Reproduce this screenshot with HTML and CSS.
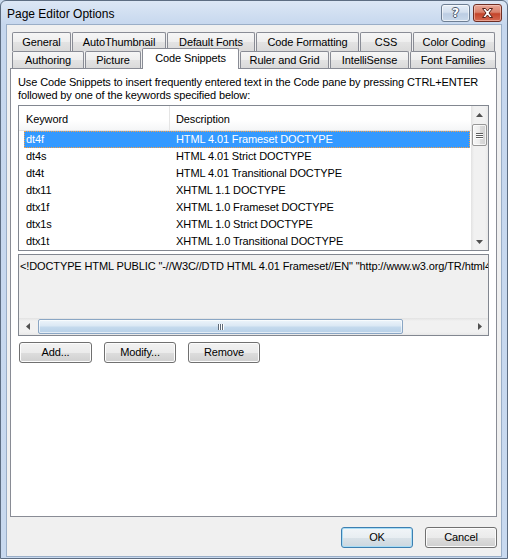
FILE: index.html
```html
<!DOCTYPE html>
<html>
<head>
<meta charset="utf-8">
<title>Page Editor Options</title>
<link rel="stylesheet" href="styles.css">
</head>
<body>
<div class="window">
  <div class="titlebar">
    <div class="title">Page Editor Options</div>
    <div class="caption-buttons">
      <div class="cbtn help"><span class="qmark">?</span></div>
      <div class="cbtn close">
        <svg width="13" height="10" viewBox="0 0 13 10"><path d="M1.5 0.5 L4.5 0.5 L6.5 3 L8.5 0.5 L11.5 0.5 L8 5 L11.5 9.5 L8.5 9.5 L6.5 7 L4.5 9.5 L1.5 9.5 L5 5 Z" fill="#fff" stroke="#5a2219" stroke-width="1" stroke-linejoin="round"/></svg>
      </div>
    </div>
  </div>
  <div class="client">
    <div class="tabs">
      <div class="tabrow row1">
        <div class="tab w-general">General</div>
        <div class="tab w-auto">AutoThumbnail</div>
        <div class="tab w-fonts">Default Fonts</div>
        <div class="tab w-format">Code Formatting</div>
        <div class="tab w-css">CSS</div>
        <div class="tab w-color">Color Coding</div>
      </div>
      <div class="tabrow row2">
        <div class="tab w-author">Authoring</div>
        <div class="tab w-picture">Picture</div>
        <div class="tab selected w-snippets">Code Snippets</div>
        <div class="tab w-ruler">Ruler and Grid</div>
        <div class="tab w-intelli">IntelliSense</div>
        <div class="tab w-families">Font Families</div>
      </div>
    </div>
    <div class="panel">
      <p class="intro">Use Code Snippets to insert frequently entered text in the Code pane by pressing CTRL+ENTER<br>followed by one of the keywords specified below:</p>
      <div class="listview">
        <div class="lv-main">
          <div class="lv-header">
            <div class="h-kw">Keyword</div>
            <div class="h-desc">Description</div>
          </div>
          <div class="lv-rows">
            <div class="row selected"><span class="c1">dt4f</span><span class="c2">HTML 4.01 Frameset DOCTYPE</span></div>
            <div class="row"><span class="c1">dt4s</span><span class="c2">HTML 4.01 Strict DOCTYPE</span></div>
            <div class="row"><span class="c1">dt4t</span><span class="c2">HTML 4.01 Transitional DOCTYPE</span></div>
            <div class="row"><span class="c1">dtx11</span><span class="c2">XHTML 1.1 DOCTYPE</span></div>
            <div class="row"><span class="c1">dtx1f</span><span class="c2">XHTML 1.0 Frameset DOCTYPE</span></div>
            <div class="row"><span class="c1">dtx1s</span><span class="c2">XHTML 1.0 Strict DOCTYPE</span></div>
            <div class="row"><span class="c1">dtx1t</span><span class="c2">XHTML 1.0 Transitional DOCTYPE</span></div>
          </div>
        </div>
        <div class="vscroll">
          <div class="sb-btn"><svg width="7" height="4" viewBox="0 0 7 4"><path d="M3.5 0 L7 4 L0 4 Z" fill="#505050"/></svg></div>
          <div class="vthumb"><span class="grip"></span><span class="grip"></span><span class="grip"></span></div>
          <div class="sb-fill"></div>
          <div class="sb-btn"><svg width="7" height="4" viewBox="0 0 7 4"><path d="M0 0 L7 0 L3.5 4 Z" fill="#505050"/></svg></div>
        </div>
      </div>
      <div class="codebox">
        <div class="code-text">&lt;!DOCTYPE HTML PUBLIC "-//W3C//DTD HTML 4.01 Frameset//EN" "http://www.w3.org/TR/html4/frameset.dtd"&gt;</div>
        <div class="hscroll">
          <div class="hsb-btn"><svg width="4" height="7" viewBox="0 0 4 7"><path d="M4 0 L4 7 L0 3.5 Z" fill="#505050"/></svg></div>
          <div class="hthumb"><span class="vgrip"></span><span class="vgrip"></span><span class="vgrip"></span></div>
          <div class="sb-fill"></div>
          <div class="hsb-btn"><svg width="4" height="7" viewBox="0 0 4 7"><path d="M0 0 L4 3.5 L0 7 Z" fill="#505050"/></svg></div>
        </div>
      </div>
      <div class="btnrow">
        <div class="button w-add">Add...</div>
        <div class="button w-std">Modify...</div>
        <div class="button w-std">Remove</div>
      </div>
    </div>
    <div class="footer">
      <div class="button default w-std">OK</div>
      <div class="button w-std">Cancel</div>
    </div>
  </div>
</div>
</body>
</html>
```

FILE: styles.css
```css
* { box-sizing: border-box; margin: 0; padding: 0; }
html, body { width: 508px; height: 559px; overflow: hidden; }
body {
  font-family: "Liberation Sans", Arial, sans-serif;
  font-size: 11px;
  letter-spacing: -0.12px;
  color: #000;
  background: #c9d9ed;
}
.window {
  width: 508px;
  height: 559px;
  border: 1px solid #5d6d82;
  border-radius: 6px 6px 0 0;
  background: linear-gradient(#dce7f5, #c6d7ee 24px, #c8d9ef);
  display: flex;
  flex-direction: column;
}
.titlebar {
  height: 24px;
  flex: none;
  display: flex;
  align-items: flex-start;
  padding-left: 6px;
  padding-right: 5px;
}
.title {
  flex: 1;
  font-size: 12px;
  line-height: 14px;
  margin-top: 6px;
  letter-spacing: 0;
  color: #000;
}
.caption-buttons {
  display: flex;
  gap: 3px;
  margin-top: 3px;
}
.cbtn {
  width: 29px;
  height: 18px;
  border-radius: 3px;
  display: flex;
  align-items: center;
  justify-content: center;
}
.help {
  border: 1px solid #6d7e93;
  background: linear-gradient(#e6eef8, #d3dfee 45%, #bccde3 55%, #c9d8ea);
  box-shadow: inset 0 0 0 1px rgba(255,255,255,0.6);
}
.qmark {
  font-family: "DejaVu Sans", sans-serif;
  font-weight: bold;
  font-size: 12px;
  line-height: 12px;
  color: #fff;
  text-shadow: 1px 0 0 #4a5a6e, -1px 0 0 #4a5a6e, 0 1px 0 #4a5a6e, 0 -1px 0 #4a5a6e;
}
.close {
  border: 1px solid #6e2e24;
  background: linear-gradient(#e9a797, #d9826d 45%, #c4442b 55%, #d56a52);
  box-shadow: inset 0 0 0 1px rgba(255,220,210,0.5);
}
.client {
  flex: 1;
  margin: 0 6px 2px 6px;
  background: #f0f0f0;
  box-shadow: 0 0 0 1px #9aaec7;
  display: flex;
  flex-direction: column;
}
/* tabs */
.tabs {
  padding: 7px 0 0 5px;
  position: relative;
  z-index: 2;
}
.tabrow {
  display: flex;
  gap: 1px;
  align-items: flex-start;
}
.row1 { height: 19px; }
.row2 { height: 17px; }
.tab {
  flex: none;
  text-align: center;
  border: 1px solid #898c95;
  border-bottom: none;
  border-radius: 2px 2px 0 0;
  background: linear-gradient(#f6f6f6, #eeeeee 50%, #e3e3e3 52%, #dadada);
  white-space: nowrap;
}
.row1 .tab { height: 19px; line-height: 18px; }
.row2 .tab { height: 17px; line-height: 16px; }
.row2 .tab.selected {
  height: 21px;
  line-height: 19px;
  margin-top: -3px;
  background: #fff;
  position: relative;
  z-index: 3;
}
.w-general { width: 59px; }
.w-auto { width: 94px; }
.w-fonts { width: 88px; }
.w-format { width: 103px; }
.w-css { width: 52px; }
.w-color { width: 82px; }
.w-author { width: 72px; }
.w-picture { width: 56px; }
.w-snippets { width: 97px; }
.w-ruler { width: 89px; }
.w-intelli { width: 79px; }
.w-families { width: 86px; }
/* panel */
.panel {
  position: relative;
  z-index: 1;
  margin-left: 3px;
  width: 487px;
  height: 449px;
  border: 1px solid #898c95;
  background: #fff;
  padding: 7px 0 0 7px;
  flex: none;
}
.intro {
  line-height: 13px;
  white-space: nowrap;
}
.listview {
  margin-top: 3px;
  width: 471px;
  height: 146px;
  border: 1px solid #828790;
  display: flex;
  background: #fff;
}
.lv-main { width: 452px; flex: none; }
.lv-header {
  height: 25px;
  display: flex;
  border-bottom: 1px solid #e5e5e5;
  background: linear-gradient(#ffffff, #ffffff 60%, #f5f6f7);
  line-height: 24px;
  padding-top: 1px;
}
.h-kw {
  width: 151px;
  padding-left: 7px;
  border-right: 1px solid #e5e5e5;
  margin-top: -1px;
  padding-top: 1px;
}
.h-desc { padding-left: 6px; }
.row {
  height: 17px;
  line-height: 15px;
  margin-left: 5px;
  width: 446px;
  border: 1px solid transparent;
  display: flex;
  white-space: nowrap;
}
.row.selected {
  background: #3399ff;
  color: #fff;
  border: 1px dotted #f3a04a;
}
.c1 { width: 145px; padding-left: 1px; }
.c2 { padding-left: 6px; }
/* scrollbars */
.vscroll {
  width: 17px;
  flex: none;
  display: flex;
  flex-direction: column;
  background: linear-gradient(90deg, #e2e2e2, #f1f1f1 3px, #f1f1f1 14px, #e8e8e8);
}
.sb-btn {
  height: 17px;
  flex: none;
  display: flex;
  align-items: center;
  justify-content: center;
}
.sb-fill { flex: 1; }
.vthumb {
  margin: 1px 1px 0 1px;
  height: 22px;
  border: 1px solid #979797;
  border-radius: 2px;
  background: linear-gradient(90deg, #f7f7f7, #ececec 50%, #dcdcdc 52%, #d2d2d2);
  box-shadow: inset 0 0 0 1px rgba(255,255,255,0.7);
  display: flex;
  flex-direction: column;
  align-items: center;
  justify-content: center;
  gap: 1px;
}
.grip {
  width: 7px;
  height: 1px;
  background: #5e5e5e;
  box-shadow: 0 1px 0 #fff;
}
.codebox {
  margin-top: 3px;
  width: 471px;
  height: 82px;
  border: 1px solid #828790;
  background: #f0f0f0;
  display: flex;
  flex-direction: column;
}
.code-text {
  flex: 1;
  padding: 4px 0 0 1px;
  line-height: 15px;
  white-space: nowrap;
  overflow: hidden;
}
.hscroll {
  height: 17px;
  flex: none;
  display: flex;
  background: linear-gradient(#e2e2e2, #f1f1f1 3px, #f1f1f1 14px, #e8e8e8);
}
.hsb-btn {
  width: 17px;
  flex: none;
  display: flex;
  align-items: center;
  justify-content: center;
}
.hthumb {
  margin: 1px 0 1px 2px;
  width: 365px;
  border: 1px solid #8aa6c4;
  border-radius: 2px;
  background: linear-gradient(#eef5fb, #dbe8f4 45%, #c5daed 55%, #b7d0e8);
  box-shadow: inset 0 0 0 1px rgba(255,255,255,0.6);
  display: flex;
  align-items: center;
  justify-content: center;
  gap: 1px;
}
.vgrip {
  width: 1px;
  height: 6px;
  background: #5e6a78;
  box-shadow: 1px 0 0 #fff;
}
/* buttons */
.btnrow {
  margin-top: 6px;
  margin-left: 1px;
  display: flex;
  gap: 12px;
}
.button {
  height: 21px;
  line-height: 19px;
  text-align: center;
  border: 1px solid #707070;
  border-radius: 3px;
  background: linear-gradient(#f2f2f2, #ebebeb 50%, #dddddd 52%, #cfcfcf);
  box-shadow: inset 0 0 0 1px #fcfcfc;
}
.w-add { width: 73px; }
.w-std { width: 72px; }
.button.default {
  border-color: #3c7fb1;
  box-shadow: inset 0 0 0 1px #a8dcf5;
  background: linear-gradient(#f1f5f8, #e8eef2 50%, #d9e2e8 52%, #ccd7df);
}
.footer {
  margin-top: 10px;
  display: flex;
  justify-content: flex-end;
  gap: 12px;
  padding-right: 4px;
}
```
